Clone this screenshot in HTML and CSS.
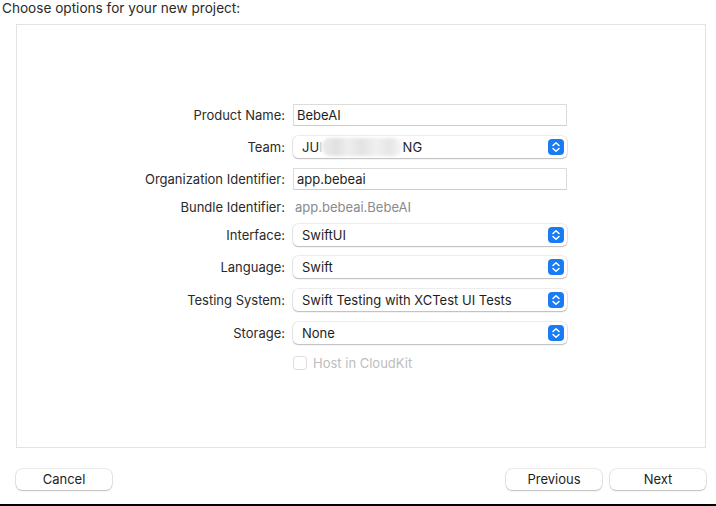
FILE: index.html
```html
<!DOCTYPE html>
<html>
<head>
<meta charset="utf-8">
<link rel="stylesheet" href="styles.css">
</head>
<body>
<div class="window">
  <div class="title">Choose options for your new project:</div>
  <div class="panel">
    <div class="form">
      <div class="label">Product Name:</div>
      <div class="field text-field">BebeAI</div>

      <div class="label">Team:</div>
      <div class="field popup"><span class="val">JU<span class="cut">I</span><span class="blur"></span>NG</span><span class="stepper"><svg width="16" height="16" viewBox="0 0 16 16"><rect width="16" height="16" rx="4" fill="#1a7cf5"/><path d="M5 6.5 L8 3.8 L11 6.5 M5 9.5 L8 12.2 L11 9.5" stroke="#fff" stroke-width="1.5" fill="none" stroke-linecap="round" stroke-linejoin="round"/></svg></span></div>

      <div class="label">Organization Identifier:</div>
      <div class="field text-field">app.bebeai</div>

      <div class="label">Bundle Identifier:</div>
      <div class="field plain">app.bebeai.BebeAI</div>

      <div class="label">Interface:</div>
      <div class="field popup"><span class="val">SwiftUI</span><span class="stepper"><svg width="16" height="16" viewBox="0 0 16 16"><rect width="16" height="16" rx="4" fill="#1a7cf5"/><path d="M5 6.5 L8 3.8 L11 6.5 M5 9.5 L8 12.2 L11 9.5" stroke="#fff" stroke-width="1.5" fill="none" stroke-linecap="round" stroke-linejoin="round"/></svg></span></div>

      <div class="label">Language:</div>
      <div class="field popup"><span class="val">Swift</span><span class="stepper"><svg width="16" height="16" viewBox="0 0 16 16"><rect width="16" height="16" rx="4" fill="#1a7cf5"/><path d="M5 6.5 L8 3.8 L11 6.5 M5 9.5 L8 12.2 L11 9.5" stroke="#fff" stroke-width="1.5" fill="none" stroke-linecap="round" stroke-linejoin="round"/></svg></span></div>

      <div class="label lower">Testing System:</div>
      <div class="field popup lower"><span class="val">Swift Testing with XCTest UI Tests</span><span class="stepper"><svg width="16" height="16" viewBox="0 0 16 16"><rect width="16" height="16" rx="4" fill="#1a7cf5"/><path d="M5 6.5 L8 3.8 L11 6.5 M5 9.5 L8 12.2 L11 9.5" stroke="#fff" stroke-width="1.5" fill="none" stroke-linecap="round" stroke-linejoin="round"/></svg></span></div>

      <div class="label lower">Storage:</div>
      <div class="field popup lower"><span class="val">None</span><span class="stepper"><svg width="16" height="16" viewBox="0 0 16 16"><rect width="16" height="16" rx="4" fill="#1a7cf5"/><path d="M5 6.5 L8 3.8 L11 6.5 M5 9.5 L8 12.2 L11 9.5" stroke="#fff" stroke-width="1.5" fill="none" stroke-linecap="round" stroke-linejoin="round"/></svg></span></div>

      <div class="label"></div>
      <div class="field check"><span class="box"></span>Host in CloudKit</div>
    </div>
  </div>
  <div class="buttons">
    <div class="btn">Cancel</div>
    <div class="spacer"></div>
    <div class="btn">Previous</div>
    <div class="btn">Next</div>
  </div>
  <div class="bottom-bar"></div>
</div>
</body>
</html>
```

FILE: styles.css
```css
* { box-sizing: border-box; }
html, body { margin: 0; padding: 0; background: #fff; }
body {
  font-family: "Inter", "Liberation Sans", sans-serif;
  font-size: 13px;
  color: #262626;
  width: 716px;
  height: 506px;
  overflow: hidden;
}
.window {
  display: flex;
  flex-direction: column;
  height: 506px;
}
.title {
  height: 24px;
  padding: 0 0 0 2px;
  line-height: 16px;
  font-size: 13.6px;
  color: #2a2a2a;
}
.panel {
  margin: 0 10px 0 16px;
  height: 424px;
  border: 1px solid #e3e3e3;
  background: #fff;
  padding-top: 79px;
}
.form {
  display: grid;
  grid-template-columns: 268px 274px;
  column-gap: 8px;
  row-gap: 10px;
  align-items: center;
}
.label {
  text-align: right;
  color: #2a2a2a;
  white-space: nowrap;
  line-height: 14px;
}
.lower { margin-top: 1px; }
.field { height: 22px; display: flex; align-items: center; line-height: 14px; }
.text-field {
  border: 1px solid #dcdcdc;
  border-bottom-color: #cfcfcf;
  padding-left: 3px;
  color: #1e1e1e;
}
.plain { height: 14px; padding-left: 2px; color: #8a8a8a; }
.popup {
  border-radius: 5px;
  background: #fff;
  box-shadow: 0 0 0 0.5px rgba(0,0,0,0.14), 0 1px 1.5px rgba(0,0,0,0.22);
  padding-left: 9px;
  padding-right: 3px;
  justify-content: space-between;
  color: #1e1e1e;
}
.val { display: flex; align-items: center; white-space: nowrap; }
.cut { color: #c4c4c4; margin-right: -1px; }
.blur {
  display: inline-block;
  width: 80px;
  height: 18px;
  margin: 0 1px 0 0;
  border-radius: 8px;
  background: linear-gradient(90deg, #ececec 0%, #e0e0e0 18%, #eeeeee 32%, #e3e3e3 50%, #f0f0f0 68%, #e6e6e6 85%, #f6f6f6 100%);
  filter: blur(1.5px);
}
.stepper { display: flex; width: 16px; height: 16px; }
.check { color: #bdbdbd; padding-left: 0; height: 18px; }
.box {
  width: 14px; height: 14px;
  border: 1px solid #dedede;
  border-radius: 3px;
  margin-right: 6px;
  background: #fff;
}
.buttons {
  display: flex;
  gap: 8px;
  padding: 21px 10px 0 16px;
}
.spacer { flex: 1; }
.btn {
  width: 96px;
  height: 21px;
  border-radius: 6px;
  background: #fff;
  box-shadow: 0 0 0 0.5px rgba(0,0,0,0.16), 0 1px 1.5px rgba(0,0,0,0.2);
  text-align: center;
  line-height: 20px;
  color: #1e1e1e;
}
.bottom-bar {
  margin-top: auto;
  height: 2px;
  background: #000;
}
```
